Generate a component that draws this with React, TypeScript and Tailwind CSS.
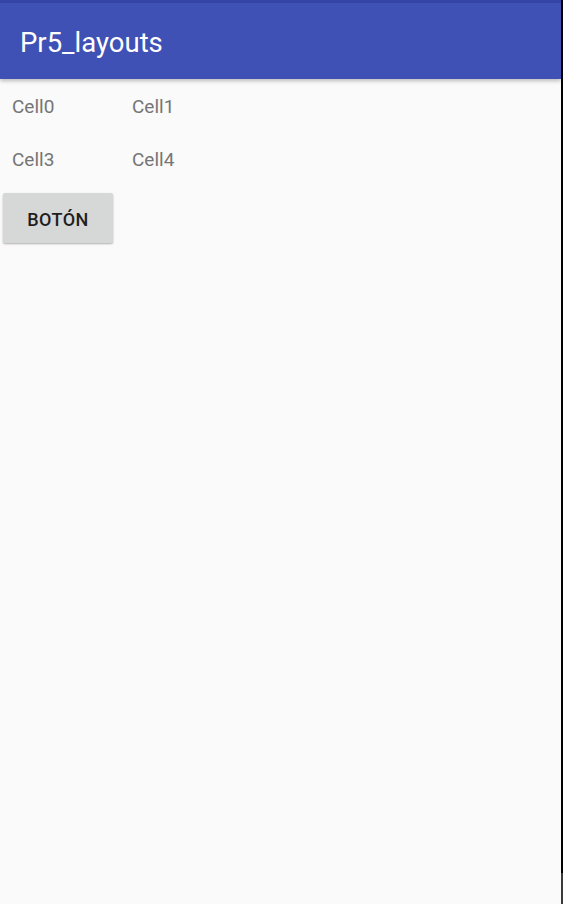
const cells = [
  ['Cell0', 'Cell1'],
  ['Cell3', 'Cell4'],
]

export default function App(): JSX.Element {
  return (
    <div className="flex h-[904px] w-[563px] overflow-hidden bg-[#fafafa] font-['Roboto',sans-serif]">
      <div className="flex flex-1 flex-col">
        <div className="h-[3px] bg-[#3545a8]" />
        <header className="relative z-10 flex h-[76px] items-center bg-[#3f51b5] pl-5 pt-[3px] shadow-[0_2px_4px_rgba(0,0,0,0.25)]">
          <h1 className="text-[27.5px] leading-none text-white">Pr5_layouts</h1>
        </header>

        <div className="flex flex-col pt-[17px]">
          <div className="flex flex-col gap-[31px]">
            {cells.map((row) => (
              <div key={row[0]} className="flex text-[19px] leading-[22px] text-[#757575]">
                <span className="w-[132px] pl-3">{row[0]}</span>
                <span>{row[1]}</span>
              </div>
            ))}
          </div>
          <button className="ml-[3px] mt-[22px] h-[50px] w-[110px] rounded-[2px] bg-[#d6d7d7] pt-[3px] text-[18px] font-medium tracking-[0.5px] text-[#1f1f1f] shadow-[0_1px_2px_rgba(0,0,0,0.3)]">
            BOTÓN
          </button>
        </div>
      </div>
      <div className="flex w-[2px] flex-col bg-black">
        <div className="flex-1" />
        <div className="h-[31px] bg-[#3a3a3a]" />
      </div>
    </div>
  )
}
